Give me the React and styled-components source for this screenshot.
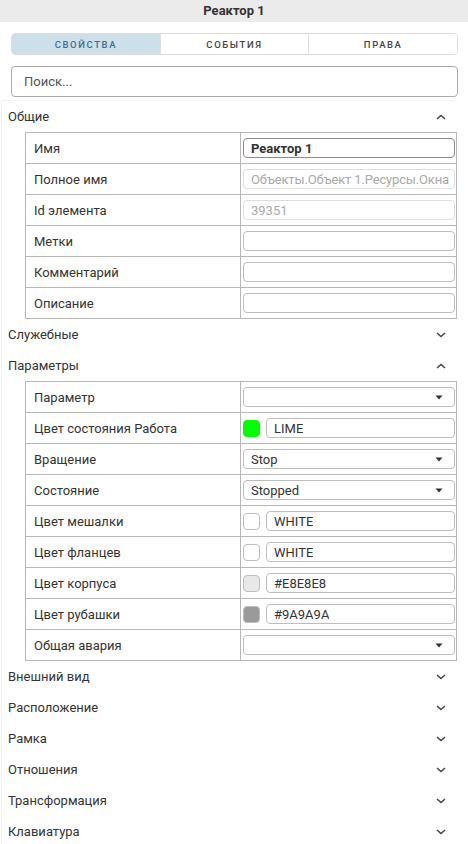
import React from 'react';
import styled, { createGlobalStyle } from 'styled-components';

const GlobalStyle = createGlobalStyle`
  body {
    margin: 0;
    background: #ffffff;
    font-family: Roboto, "Liberation Sans", Arial, sans-serif;
    color: #333333;
  }
  * { box-sizing: border-box; }
`;

const Panel = styled.div`
  width: 468px;
  min-height: 844px;
  background: #ffffff;
`;

const TitleBar = styled.div`
  height: 22px;
  background: #ebebeb;
  text-align: center;
  font-size: 13px;
  font-weight: 700;
  line-height: 22px;
  color: #333;
`;

const Tabs = styled.div`
  display: flex;
  margin: 11px 10px 0 11px;
  height: 22px;
  border: 1px solid #dedede;
  border-radius: 4px;
  overflow: hidden;
`;

const Tab = styled.div`
  flex: 1;
  display: flex;
  align-items: center;
  justify-content: center;
  font-size: 9.5px;
  font-weight: 500;
  letter-spacing: 1.6px;
  text-transform: uppercase;
  color: ${p => (p.$active ? '#3e6e92' : '#444')};
  background: ${p => (p.$active ? '#cddfe9' : '#fff')};
  & + & { border-left: 1px solid #dedede; }
`;

const Search = styled.input`
  display: block;
  margin: 11px 10px 0 11px;
  width: 447px;
  height: 31px;
  border: 1px solid #aaaaaa;
  border-radius: 4px;
  padding: 0 12px;
  font-family: inherit;
  font-size: 13px;
  color: #333;
  outline: none;
  &::placeholder { color: #555; }
`;

const Sections = styled.div`
  margin: 3px 0 0 1px;
  width: 456px;
  border-top: 1px solid #f3f3f3;
  border-left: 1px solid #f3f3f3;
  border-radius: 4px 0 0 0;
`;

const SectionHead = styled.div`
  height: 31px;
  display: flex;
  align-items: center;
  justify-content: space-between;
  padding: 0 11px 0 6px;
  font-size: 13px;
  color: #333;
`;

const Grid = styled.div`
  margin: 0 0 0 23px;
  width: 432px;
  border: 1px solid #b7b7b7;
  display: grid;
  grid-template-columns: 215px minmax(0, 1fr);
`;

const Label = styled.div`
  display: flex;
  align-items: center;
  padding-left: 8px;
  font-size: 13px;
  color: #333;
  border-right: 1px solid #b7b7b7;
  border-top: ${p => (p.$first ? 'none' : '1px solid #b7b7b7')};
  height: ${p => (p.$first ? '30px' : '31px')};
`;

const Value = styled.div`
  display: flex;
  align-items: center;
  gap: 6px;
  min-width: 0;
  padding: 0 1px 0 2px;
  border-top: ${p => (p.$first ? 'none' : '1px solid #b7b7b7')};
  height: ${p => (p.$first ? '30px' : '31px')};
`;

const Field = styled.div`
  flex: 1;
  min-width: 0;
  height: 20px;
  display: flex;
  align-items: center;
  justify-content: space-between;
  gap: 4px;
  padding: 0 ${p => (p.$select ? '11px' : '1px')} 0 7px;
  border: 1px solid ${p => (p.$strong ? '#8c8c8c' : p.$disabled ? '#dddddd' : '#bdbdbd')};
  border-radius: 4px;
  font-size: 13px;
  font-weight: ${p => (p.$bold ? 700 : 400)};
  color: ${p => (p.$disabled ? '#a9a9a9' : '#333')};
  white-space: nowrap;
  overflow: hidden;
`;

const FieldText = styled.span`
  overflow: hidden;
  min-width: 0;
  letter-spacing: ${p => (p.$tight ? '-0.15px' : '0')};
`;

const Swatch = styled.div`
  width: 17px;
  height: 17px;
  border-radius: 4px;
  border: 1px solid ${p => (p.$color === '#00ff00' ? '#00ff00' : '#bdbdbd')};
  background: ${p => p.$color};
  flex: none;
`;

const Caret = () => (
  <svg width="8" height="5" viewBox="0 0 8 5" style={{ flex: 'none' }}>
    <path d="M0.5 0.5 L7.5 0.5 L4 4.5 Z" fill="#333" />
  </svg>
);

const Chevron = ({ open }) => (
  <svg width="10" height="6" viewBox="0 0 10 6">
    <polyline
      points={open ? '1,5 5,1.5 9,5' : '1,1 5,4.5 9,1'}
      fill="none"
      stroke="#444"
      strokeWidth="1.5"
    />
  </svg>
);

const general = [
  { label: 'Имя', value: 'Реактор 1', bold: true, strong: true },
  { label: 'Полное имя', value: 'Объекты.Объект 1.Ресурсы.Окна', disabled: true, tight: true },
  { label: 'Id элемента', value: '39351', disabled: true },
  { label: 'Метки', value: '' },
  { label: 'Комментарий', value: '' },
  { label: 'Описание', value: '' },
];

const params = [
  { label: 'Параметр', value: '', select: true },
  { label: 'Цвет состояния Работа', value: 'LIME', color: '#00ff00' },
  { label: 'Вращение', value: 'Stop', select: true },
  { label: 'Состояние', value: 'Stopped', select: true },
  { label: 'Цвет мешалки', value: 'WHITE', color: '#ffffff' },
  { label: 'Цвет фланцев', value: 'WHITE', color: '#ffffff' },
  { label: 'Цвет корпуса', value: '#E8E8E8', color: '#e8e8e8' },
  { label: 'Цвет рубашки', value: '#9A9A9A', color: '#9a9a9a' },
  { label: 'Общая авария', value: '', select: true },
];

const PropTable = ({ rows }) => (
  <Grid>
    {rows.map((r, i) => (
      <React.Fragment key={r.label}>
        <Label $first={i === 0}>{r.label}</Label>
        <Value $first={i === 0}>
          {r.color && <Swatch $color={r.color} />}
          <Field $bold={r.bold} $strong={r.strong} $disabled={r.disabled} $select={r.select}>
            <FieldText $tight={r.tight}>{r.value}</FieldText>
            {r.select && <Caret />}
          </Field>
        </Value>
      </React.Fragment>
    ))}
  </Grid>
);

const Section = ({ title, open, children }) => (
  <>
    <SectionHead>
      <span>{title}</span>
      <Chevron open={open} />
    </SectionHead>
    {children}
  </>
);

const App = () => (
  <Panel>
    <GlobalStyle />
    <TitleBar>Реактор 1</TitleBar>
    <Tabs>
      <Tab $active>Свойства</Tab>
      <Tab>События</Tab>
      <Tab>Права</Tab>
    </Tabs>
    <Search placeholder="Поиск..." />
    <Sections>
      <Section title="Общие" open>
        <PropTable rows={general} />
      </Section>
      <Section title="Служебные" />
      <Section title="Параметры" open>
        <PropTable rows={params} />
      </Section>
      <Section title="Внешний вид" />
      <Section title="Расположение" />
      <Section title="Рамка" />
      <Section title="Отношения" />
      <Section title="Трансформация" />
      <Section title="Клавиатура" />
    </Sections>
  </Panel>
);

export default App;
